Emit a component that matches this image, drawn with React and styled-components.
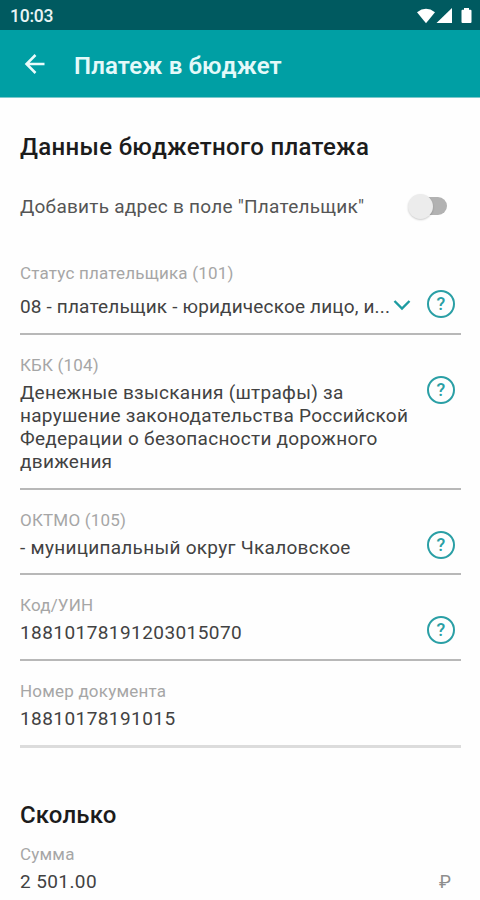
import React from "react";
import styled, { createGlobalStyle } from "styled-components";

const GlobalStyle = createGlobalStyle`
  * { box-sizing: border-box; }
  html, body { margin: 0; padding: 0; background: #fefefe; }
  body { overflow: hidden; font-family: Roboto, "Noto Sans", sans-serif; }
`;

const Screen = styled.div`
  width: 480px;
  height: 900px;
  overflow: hidden;
  display: flex;
  flex-direction: column;
  background: #fefefe;
`;

const StatusBar = styled.div`
  flex: none;
  height: 30px;
  padding: 1px 8px 0 10px;
  display: flex;
  align-items: center;
  justify-content: space-between;
  background: #005a60;
  color: #e8f4f4;
`;

const Clock = styled.span`
  font-size: 17.5px;
  font-weight: 500;
  letter-spacing: -0.25px;
`;

const StatusIcons = styled.svg`
  display: block;
  width: 56px;
  height: 18px;
`;

const AppBar = styled.header`
  flex: none;
  height: 68px;
  padding: 0 24px;
  display: flex;
  align-items: center;
  background: #009fa4;
  border-bottom: 1px solid #7cc8cb;
`;

const BackIcon = styled.svg`
  width: 22px;
  height: 22px;
  margin-right: 28px;
`;

const AppTitle = styled.h1`
  margin: 5px 0 0;
  font-size: 24px;
  line-height: 30px;
  font-weight: 600;
  letter-spacing: 0.15px;
  color: #e4f9f9;
`;

const Content = styled.main`
  display: flex;
  flex-direction: column;
  padding: 34px 19px 0 20px;
`;

const Heading = styled.h2`
  margin: ${(p) => p.$top || 0}px 0 ${(p) => p.$bottom || 0}px;
  font-size: 24px;
  line-height: 30px;
  font-weight: 500;
  letter-spacing: ${(p) => p.$spacing}px;
  color: #1c1c1c;
`;

const ToggleRow = styled.div`
  display: flex;
  align-items: center;
  justify-content: space-between;
  height: 30px;
  margin: 29px 14px 38px 0;
`;

const ToggleText = styled.span`
  font-size: 19px;
  letter-spacing: 0.25px;
  color: #555;
`;

const Track = styled.span`
  width: 36px;
  height: 18px;
  border-radius: 9px;
  background: #b2b2b2;
  display: flex;
  align-items: center;
`;

const Thumb = styled.span`
  width: 25px;
  height: 25px;
  flex: none;
  margin-left: -3px;
  border-radius: 50%;
  background: #ececec;
  box-shadow: 0 1px 2px rgba(0, 0, 0, 0.2);
`;

const Field = styled.section`
  padding: ${(p) => p.$top ?? 20}px 0 ${(p) => p.$bottom ?? 14.7}px;
  border-bottom: ${(p) => (p.$last ? "3px solid #dcdcdc" : "2px solid #b8b8b8")};
`;

const Label = styled.div`
  height: 20px;
  margin-bottom: ${(p) => p.$gap ?? 6}px;
  font-size: 17px;
  line-height: 20px;
  letter-spacing: 0.2px;
  color: #a6a6a6;
`;

const ValueRow = styled.div`
  display: flex;
  align-items: flex-start;
  justify-content: space-between;
`;

const Value = styled.div`
  font-size: 19px;
  line-height: 23px;
  letter-spacing: ${(p) => p.$spacing ?? 0.28}px;
  color: #424242;
  white-space: pre;
`;

const Chevron = styled.svg`
  flex: none;
  width: 18px;
  height: 12px;
  margin: 4px 16px 0 auto;
`;

const Help = styled.span`
  flex: none;
  width: 28px;
  height: 28px;
  margin: -5px 6px -5px 0;
  border: 2px solid #2a9fa5;
  border-radius: 50%;
  display: flex;
  align-items: center;
  justify-content: center;
  font-size: 18px;
  font-weight: 500;
  line-height: 24px;
  color: #2a9fa5;
`;

const Currency = styled.span`
  margin-right: 10px;
  font-size: 18px;
  line-height: 23px;
  color: #8d8d8d;
`;

function InfoField({ label, valueSpacing, bottom, help, last, children }) {
  return (
    <Field $last={last} $bottom={bottom}>
      <Label>{label}</Label>
      <ValueRow>
        <Value $spacing={valueSpacing}>{children}</Value>
        {help && <Help>?</Help>}
      </ValueRow>
    </Field>
  );
}

export default function App() {
  return (
    <>
      <GlobalStyle />
      <Screen>
        <StatusBar>
          <Clock>10:03</Clock>
          <StatusIcons viewBox="0 0 56 18" fill="#fff">
            <path d="M1 5.2Q10 -1.6 19 5.2L10 16.2Z" />
            <path d="M36 1V16H20.5Z" />
            <path d="M48 1h5v1.8h1.5q1 0 1 1V15q0 1-1 1h-8q-1 0-1-1V3.8q0-1 1-1H48Z" />
          </StatusIcons>
        </StatusBar>
        <AppBar>
          <BackIcon viewBox="0 0 22 22" fill="none" stroke="#e9fbfb" strokeWidth="2.5">
            <path d="M20.5 11H3M11.5 2L2.5 11L11.5 20" />
          </BackIcon>
          <AppTitle>Платеж в бюджет</AppTitle>
        </AppBar>
        <Content>
          <Heading $spacing={0.32}>Данные бюджетного платежа</Heading>
          <ToggleRow>
            <ToggleText>Добавить адрес в поле "Плательщик"</ToggleText>
            <Track role="switch" aria-checked="false">
              <Thumb />
            </Track>
          </ToggleRow>
          <Field $top={4} $bottom={14.5}>
            <Label $gap={12}>Статус плательщика (101)</Label>
            <ValueRow>
              <Value $spacing={0.16}>08 - плательщик - юридическое лицо, и...</Value>
              <Chevron viewBox="0 0 18 12" fill="none" stroke="#1d9ba1" strokeWidth="2.4">
                <path d="M1.5 2L9 9.5L16.5 2" />
              </Chevron>
              <Help>?</Help>
            </ValueRow>
          </Field>
          <InfoField label="КБК (104)" bottom={15} help>
            {"Денежные взыскания (штрафы) за\nнарушение законодательства Российской\nФедерации о безопасности дорожного\nдвижения"}
          </InfoField>
          <InfoField label="ОКТМО (105)" help>- муниципальный округ Чкаловское</InfoField>
          <InfoField label="Код/УИН" valueSpacing={0.43} help>18810178191203015070</InfoField>
          <InfoField label="Номер документа" valueSpacing={0.43} last>18810178191015</InfoField>
          <Heading $top={52.5} $bottom={14} $spacing={0.15}>Сколько</Heading>
          <Label>Сумма</Label>
          <ValueRow>
            <Value $spacing={0.4}>2 501.00</Value>
            <Currency>₽</Currency>
          </ValueRow>
        </Content>
      </Screen>
    </>
  );
}
